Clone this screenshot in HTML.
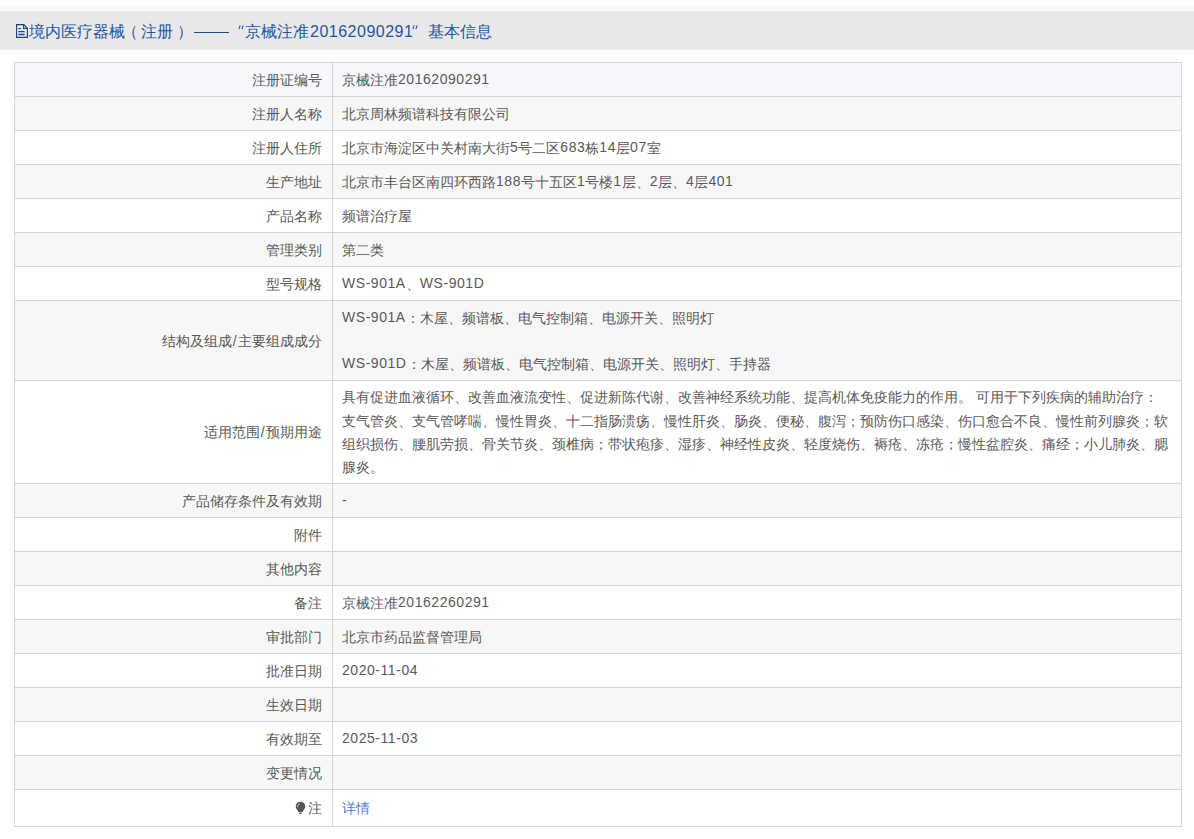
<!DOCTYPE html>
<html><head><meta charset="utf-8">
<style>
*{margin:0;padding:0;box-sizing:border-box}
html,body{width:1194px;height:839px;background:#fff;overflow:hidden;font-family:"Liberation Sans",sans-serif;}
.top{position:absolute;left:0;top:0;width:1194px;height:11px;background:linear-gradient(#fdfdfd 0,#fdfdfd 5px,#f8f8f8 6px,#f8f8f8 11px);}
.sub{position:absolute;left:0;top:50px;width:1194px;height:4px;background:#fbfbfb}
.hdr{position:absolute;left:0;top:11px;width:1194px;height:39px;background:linear-gradient(#ebebeb 0,#ebebeb 1px,#e8e8e8 1px,#e8e8e8 38px,#eeeeee 38px);}
.hs{position:absolute;top:11px;font-size:16px;line-height:20px;color:#1e56a0;white-space:nowrap}
.ic{position:absolute;left:15px;top:12px}
.dashl{position:absolute;left:194px;top:21px;width:35px;height:1px;background:#1f4a85}
.q1{position:absolute;left:238px;top:14px}
.q2{position:absolute;left:412px;top:14px}
.hn{letter-spacing:0.5px}
table{position:absolute;left:14px;top:62px;width:1168px;border-collapse:collapse;font-size:14px;color:#595959;}
td{border:1px solid #d4d4d4;height:34px;padding:0 9px;vertical-align:middle;white-space:nowrap;line-height:20px}
td.l{width:318px;text-align:right;padding-right:10px}
tr:nth-child(even) td{background:#f7f7f7}
tr:nth-child(odd) td{background:#fff}
tr.f td{background:#f5f7fa}
tr.r3 td{height:80px}
tr.r4 td{height:103px}
tr.rz td{height:37px}
.ml{line-height:23.3px}
tr.r3 .ml{position:relative;top:1px;line-height:23px}
tr.r4 .ml{position:relative;top:1px}
.sl{padding:0 1.3px}
.n{letter-spacing:0.55px;position:relative;top:-1px}
.bulb{vertical-align:-2px;margin-right:2.5px}
a{color:#4a80d6;text-decoration:none}

</style></head><body>
<div class="top"></div><div class="sub"></div>
<div class="hdr"><svg class="ic" width="14" height="16" viewBox="0 0 14 16"><path d="M1.6 1.6H8.8L12.4 5.2V14.4H1.6Z" fill="#e4f0fa" stroke="#1d4478" stroke-width="1.15" stroke-linejoin="miter"/><path d="M8.6 1.6V5.3H12.4" fill="none" stroke="#1d4478" stroke-width="1.2"/><path d="M3.4 5.6H6M3.4 8.6H9.6M3.4 11.5H9.6" stroke="#1d4478" stroke-width="1.3"/></svg><span class="hs" style="left:29px">境内医疗器械</span><span class="hs" style="left:122px">（</span><span class="hs" style="left:141px">注册</span><span class="hs" style="left:177px">）</span><div class="dashl"></div><svg class="q1" width="6" height="5" viewBox="0 0 6 5"><path d="M2.2 0.3L0.9 4.2M5.2 0.3L3.9 4.2" stroke="#1e56a0" stroke-width="1.1"/></svg><span class="hs" style="left:245px">京械注准</span><span class="hs hn" style="left:310px">20162090291</span><svg class="q2" width="6" height="5" viewBox="0 0 6 5"><path d="M2.2 0.3L0.9 4.2M5.2 0.3L3.9 4.2" stroke="#1e56a0" stroke-width="1.1"/></svg><span class="hs" style="left:428px">基本信息</span></div>
<table>
<tr class="f"><td class="l">注册证编号</td><td>京械注准<span class="n">20162090291</span></td></tr>
<tr><td class="l">注册人名称</td><td>北京周林频谱科技有限公司</td></tr>
<tr><td class="l">注册人住所</td><td>北京市海淀区中关村南大街<span class="n">5</span>号二区<span class="n">683</span>栋<span class="n">14</span>层<span class="n">07</span>室</td></tr>
<tr><td class="l">生产地址</td><td>北京市丰台区南四环西路<span class="n">188</span>号十五区<span class="n">1</span>号楼<span class="n">1</span>层、<span class="n">2</span>层、<span class="n">4</span>层<span class="n">401</span></td></tr>
<tr><td class="l">产品名称</td><td>频谱治疗屋</td></tr>
<tr><td class="l">管理类别</td><td>第二类</td></tr>
<tr><td class="l">型号规格</td><td><span class="n">WS-901A</span>、<span class="n">WS-901D</span></td></tr>
<tr class="r3"><td class="l">结构及组成<span class="sl">/</span>主要组成成分</td><td><div class="ml"><span class="n">WS-901A</span>：木屋、频谱板、电气控制箱、电源开关、照明灯<br>&nbsp;<br><span class="n">WS-901D</span>：木屋、频谱板、电气控制箱、电源开关、照明灯、手持器</div></td></tr>
<tr class="r4"><td class="l">适用范围<span class="sl">/</span>预期用途</td><td><div class="ml">具有促进血液循环、改善血液流变性、促进新陈代谢、改善神经系统功能、提高机体免疫能力的作用。 可用于下列疾病的辅助治疗：<br>支气管炎、支气管哮喘、慢性胃炎、十二指肠溃疡、慢性肝炎、肠炎、便秘、腹泻；预防伤口感染、伤口愈合不良、慢性前列腺炎；软<br>组织损伤、腰肌劳损、骨关节炎、颈椎病；带状疱疹、湿疹、神经性皮炎、轻度烧伤、褥疮、冻疮；慢性盆腔炎、痛经；小儿肺炎、腮<br>腺炎。</div></td></tr>
<tr><td class="l">产品储存条件及有效期</td><td><span class="n">-</span></td></tr>
<tr><td class="l">附件</td><td></td></tr>
<tr><td class="l">其他内容</td><td></td></tr>
<tr><td class="l">备注</td><td>京械注准<span class="n">20162260291</span></td></tr>
<tr><td class="l">审批部门</td><td>北京市药品监督管理局</td></tr>
<tr><td class="l">批准日期</td><td><span class="n">2020-11-04</span></td></tr>
<tr><td class="l">生效日期</td><td></td></tr>
<tr><td class="l">有效期至</td><td><span class="n">2025-11-03</span></td></tr>
<tr><td class="l">变更情况</td><td></td></tr>
<tr class="rz"><td class="l"><svg class="bulb" width="11" height="14" viewBox="0 0 11 14"><path d="M5.5 0.7A4.8 4.8 0 0 1 10.3 5.5C10.3 7.5 8.5 8.7 7.6 10.9H3.4C2.5 8.7 0.7 7.5 0.7 5.5A4.8 4.8 0 0 1 5.5 0.7Z" fill="#555"/><rect x="4" y="11.5" width="2.8" height="1.4" rx="0.7" fill="#555"/><path d="M2.4 6Q2.5 3.5 4.7 2.5" stroke="#d8d8d8" stroke-width="0.9" fill="none"/></svg>注</td><td><a>详情</a></td></tr>
</table>
</body></html>
